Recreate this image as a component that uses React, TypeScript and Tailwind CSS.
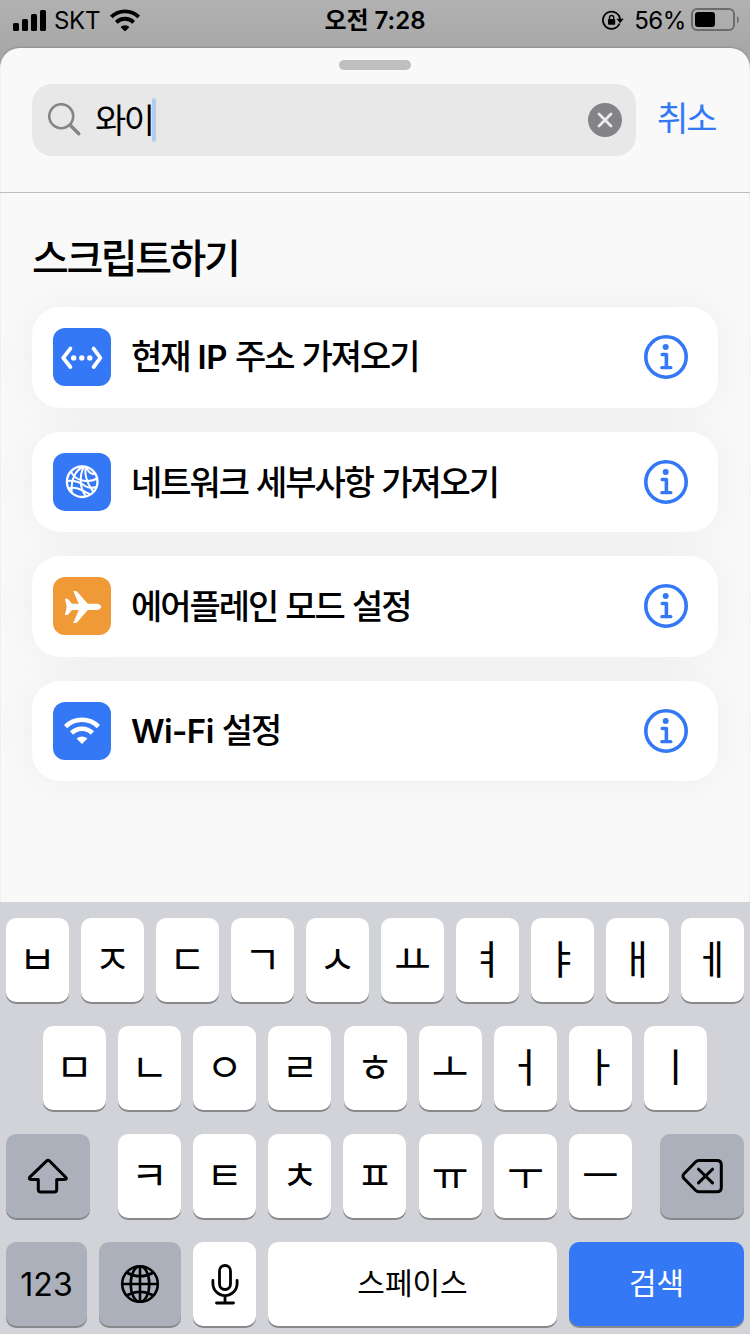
import type { ReactNode } from 'react'

const row1 = ['ㅂ', 'ㅈ', 'ㄷ', 'ㄱ', 'ㅅ', 'ㅛ', 'ㅕ', 'ㅑ', 'ㅐ', 'ㅔ']
const row2 = ['ㅁ', 'ㄴ', 'ㅇ', 'ㄹ', 'ㅎ', 'ㅗ', 'ㅓ', 'ㅏ', 'ㅣ']
const row3 = ['ㅋ', 'ㅌ', 'ㅊ', 'ㅍ', 'ㅠ', 'ㅜ', 'ㅡ']

function WifiIcon({ className }: { className: string }) {
  return (
    <svg viewBox="0 0 36 27" className={className} fill="none" stroke="currentColor">
      <path d="M1.6 9.6a23.2 23.2 0 0 1 32.8 0" strokeWidth="4.6" />
      <path d="M7.6 16a14.7 14.7 0 0 1 20.8 0" strokeWidth="4.6" />
      <path d="M18 27l-5.4-5.4a7.7 7.7 0 0 1 10.8 0z" fill="currentColor" stroke="none" />
    </svg>
  )
}

function CodeIcon() {
  return (
    <svg viewBox="0 0 58 58" className="size-full" fill="none" stroke="white">
      <path
        d="M17.4 20.6L10.2 29.8L17.4 39M40.6 20.6L47.4 29.8L40.6 39"
        strokeWidth="3.8"
        strokeLinecap="round"
        strokeLinejoin="round"
      />
      <g fill="white" stroke="none">
        <circle cx="20.7" cy="29.9" r="2.7" />
        <circle cx="28.8" cy="29.9" r="2.7" />
        <circle cx="36.8" cy="29.9" r="2.7" />
      </g>
    </svg>
  )
}

function NetworkIcon() {
  return (
    <svg viewBox="0 0 58 58" className="size-full" fill="none" stroke="white" strokeWidth="2">
      <circle cx="29.2" cy="28.7" r="15.3" strokeWidth="2.3" />
      <path d="M30.5 13.5C23 17 18 25 18.6 39.5" />
      <path d="M31 13.5C26.500 22 26 34 33 43.5" />
      <path d="M33 13.8C31 20 34 31 40.2 38.500" />
      <path d="M33.500 13.800C34 18 38 22 42 20.800" />
      <path d="M18 18.500C22 28.500 36 30 44.300 25.500" />
      <path d="M14 28C22 27 28 30 32 33C36 35.500 40 35 43 34" />
      <path d="M15.500 35.500C23 32.500 31 38.500 37 41.500" />
    </svg>
  )
}

function PlaneIcon() {
  return (
    <svg viewBox="0 0 58 58" className="size-full" fill="white">
      <path d="M48.2 29.800C48.200 31.500 46 33 43 33H34.800L24.400 45C23.800 45.700 23.200 46 22.400 46H20.200L25.800 33H19L15.400 37.300C15 37.800 14.500 38 13.900 38H12L13.700 29.800L12 21.800H13.900C14.500 21.800 15 22 15.400 22.500L19 26.800H25.800L20.200 14H22.400C23.200 14 23.800 14.300 24.400 15L34.800 26.800H43C46 26.800 48.200 28.200 48.200 29.800Z" />
    </svg>
  )
}

function InfoIcon() {
  return (
    <svg viewBox="0 0 44 44" className="size-11" fill="none" stroke="#3478f6">
      <circle cx="22" cy="22" r="20.2" strokeWidth="3.6" />
      <circle cx="21.7" cy="12" r="3" fill="#3478f6" stroke="none" />
      <path d="M18.300 19.500H22.400V32.500" strokeWidth="3.6" strokeLinecap="round" strokeLinejoin="round" />
      <path d="M17.800 32.700H26.900" strokeWidth="3.200" strokeLinecap="round" />
    </svg>
  )
}

function Latin({ children }: { children: ReactNode }) {
  return <span className="font-[Inter] text-[33px] font-semibold tracking-[-0.6px]">{children}</span>
}

const actions = [
  { id: 'ip', size: 'h-[101px] pb-px', color: 'bg-[#3478f6]', icon: <CodeIcon />, label: <>현재 <Latin>IP</Latin> 주소 가져오기</> },
  { id: 'network', size: 'h-[100px]', color: 'bg-[#3478f6]', icon: <NetworkIcon />, label: '네트워크 세부사항 가져오기' },
  { id: 'airplane', size: 'h-[101px] pb-px', color: 'bg-[#f09a37]', icon: <PlaneIcon />, label: '에어플레인 모드 설정' },
  { id: 'wifi', size: 'h-[100px]', color: 'bg-[#3478f6]', icon: <WifiIcon className="mx-auto mt-[15px] w-9 text-white" />, label: <><Latin>Wi-Fi</Latin> 설정</> },
]

function Key({ children, className = 'w-[63px] bg-white' }: { children: ReactNode; className?: string }) {
  return (
    <button className={`flex h-[84px] shrink-0 items-center justify-center rounded-[10px] shadow-[0_2px_0_#88898c] ${className}`}>
      {children}
    </button>
  )
}

function Letter({ children }: { children: string }) {
  return (
    <Key>
      <span className="pb-[6px] text-[40px] leading-none">{children}</span>
    </Key>
  )
}

function StatusBar() {
  return (
    <header className="grid h-12 grid-cols-3 bg-linear-to-b from-[#b1b1b1] to-[#a8a8a8] font-[Inter,'Noto_Sans_CJK_KR',sans-serif] text-[24px] leading-[42px]">
      <div className="flex h-10 items-center pl-[13px]">
        <svg viewBox="0 0 33 21" className="h-[21px] w-[33px]">
          <rect x="0" y="13" width="6" height="8" rx="1.5" />
          <rect x="9" y="9" width="6" height="12" rx="1.5" />
          <rect x="18" y="4" width="6" height="17" rx="1.5" />
          <rect x="27" y="0" width="6" height="21" rx="1.5" />
        </svg>
        <span className="ml-2 pt-[2px] tracking-[-0.3px]">SKT</span>
        <WifiIcon className="ml-[10px] w-[30px]" />
      </div>
      <div className="text-center font-semibold">오전 7:28</div>
      <div className="flex h-10 items-center justify-end pr-[11px]">
        <svg viewBox="0 0 22 20" className="h-5 w-[22px]" fill="none" stroke="black" strokeWidth="1.8">
          <path d="M17.500 13.500A8.600 8.600 0 1 1 18.100 9.500" />
          <path d="M14.500 8.700h7.200l-3.600 4.500z" fill="black" stroke="none" />
          <rect x="6" y="9" width="7.200" height="5.800" rx="1" fill="black" stroke="none" />
          <path d="M7.500 9.500V7.600a2.100 2.100 0 0 1 4.200 0v1.900" strokeWidth="1.300" />
        </svg>
        <span className="ml-[10px] pt-[2px] tracking-[-0.4px]">56%</span>
        <svg viewBox="0 0 48 24" className="ml-[5px] h-6 w-12">
          <rect x="1" y="1" width="42" height="21" rx="5" fill="none" stroke="#6c6c6c" strokeWidth="2" />
          <rect x="4" y="4" width="20" height="15" rx="3" />
          <path d="M46 8c2.500 1.500 2.500 6 0 7.500z" fill="#6c6c6c" />
        </svg>
      </div>
    </header>
  )
}

function Keyboard() {
  return (
    <div className="flex h-[432px] flex-col gap-6 bg-[#d2d3d9] px-[6px] pt-4">
      <div className="flex justify-between">
        {row1.map((k) => <Letter key={k}>{k}</Letter>)}
      </div>
      <div className="flex justify-between px-[37px]">
        {row2.map((k) => <Letter key={k}>{k}</Letter>)}
      </div>
      <div className="flex justify-between">
        <Key className="w-[84px] bg-[#abb0bb]">
          <svg viewBox="0 0 42 36" className="h-9 w-[42px]" fill="none" stroke="black" strokeWidth="3" strokeLinejoin="round">
            <path d="M19.7 2.8L2.8 19.2Q1.4 21.5 4 21.5H11.3V31.5Q11.3 34 13.8 34H27.2Q29.7 34 29.7 31.5V21.5H37.5Q40.6 21.5 38.7 19.2L22.3 2.8Q21 1.5 19.7 2.8Z" />
          </svg>
        </Key>
        <div className="flex w-[514px] justify-between">
          {row3.map((k) => <Letter key={k}>{k}</Letter>)}
        </div>
        <Key className="w-[84px] bg-[#abb0bb]">
          <svg viewBox="0 0 42 36" className="h-9 w-[42px]" fill="none" stroke="black" strokeWidth="3" strokeLinecap="round" strokeLinejoin="round">
            <path d="M18 2.5H36Q40.3 2.5 40.3 6.8V29.5Q40.3 33.8 36 33.8H18Q16 33.8 14.5 32.3L3 20.5Q1 18.2 3 15.8L14.5 4Q16 2.5 18 2.5ZM17.5 11.2L31.5 24.9M31.5 11.2L17.5 24.9" />
          </svg>
        </Key>
      </div>
      <div className="flex gap-3 text-[30px] leading-none">
        <Key className="w-[81px] bg-[#abb0bb]">
          <span className="pt-[2px] font-[Inter] text-[32px]">123</span>
        </Key>
        <Key className="w-[82px] bg-[#abb0bb]">
          <svg viewBox="0 0 40 40" className="size-10" fill="none" stroke="black" strokeWidth="2.6">
            <circle cx="20" cy="20" r="17.8" />
            <ellipse cx="20" cy="20" rx="9.3" ry="17.8" />
            <path d="M20 2V38M2 20H38M6.500 8.500Q20 16 33.500 8.500M6.500 31.500Q20 24 33.500 31.500" />
          </svg>
        </Key>
        <Key>
          <svg viewBox="0 0 28 42" className="h-[42px] w-7" fill="none" stroke="black" strokeWidth="2.8" strokeLinecap="round">
            <rect x="8.500" y="2.500" width="11" height="24" rx="5.500" />
            <path d="M1.900 17.500V20.500a12.100 12.100 0 0 0 24.200 0V17.500M14 32.800V40M5.500 40H22.500" />
          </svg>
        </Key>
        <Key className="w-[289px] bg-white">
          <span className="pb-[6px]">스페이스</span>
        </Key>
        <Key className="w-[175px] bg-[#3478f6] text-white">
          <span className="pb-[6px]">검색</span>
        </Key>
      </div>
    </div>
  )
}

export default function App() {
  return (
    <div className="flex h-[1334px] w-[750px] flex-col overflow-hidden bg-[#a8a8a8] font-['Noto_Sans_CJK_KR',sans-serif] text-black">
      <StatusBar />
      <main className="flex h-[854px] flex-col rounded-t-[20px] border-x border-[#f0f0f0] bg-[#f9f9f9] shadow-[0_-1px_2px_#8d8d8d]">
        <div className="mx-auto mt-3 h-[10px] w-[72px] rounded-full bg-[#bfbfc1]" />
        <div className="mt-[14px] flex h-[72px] items-center pl-[31px]">
          <div className="flex h-[72px] w-[604px] items-center rounded-[20px] bg-[#e8e8e8] pr-[14px] pl-4">
            <svg viewBox="0 0 34 34" className="size-[34px]" fill="none" stroke="#858589" strokeLinecap="round">
              <circle cx="13.2" cy="13.2" r="12" strokeWidth="2.6" />
              <path d="M22.3 22.3L30.8 30.8" strokeWidth="3.4" />
            </svg>
            <span className="ml-[13px] pb-[3px] text-[34px] leading-none tracking-[-0.075em]">와이</span>
            <span className="h-11 w-1 rounded-full bg-[#b3cdf2]" />
            <svg viewBox="0 0 34 34" className="ml-auto size-[34px]">
              <circle cx="17" cy="17" r="17" fill="#838388" />
              <path d="M11 11L23 23M23 11L11 23" stroke="#ececec" strokeWidth="2.8" strokeLinecap="round" />
            </svg>
          </div>
          <button className="ml-[21px] pb-[6px] text-[34px] leading-none tracking-[-0.06em] text-[#3478f6]">취소</button>
        </div>
        <div className="-mx-px mt-9 h-px shrink-0 bg-[#bcbcbe]" />
        <h1 className="mt-[35px] ml-[31px] h-14 text-[40px] leading-[56px] font-medium tracking-[-0.06em]">스크립트하기</h1>
        <ul className="mt-[23px] flex flex-col gap-6 px-[31px]">
          {actions.map((a) => (
            <li
              key={a.id}
              className={`flex shrink-0 items-center rounded-[28px] bg-white pr-[30px] pl-[21px] shadow-[0_0_44px_rgba(0,0,0,0.05)] ${a.size}`}
            >
              <span className={`size-[58px] rounded-[12px] ${a.color}`}>{a.icon}</span>
              <span className="ml-5 flex-1 pb-[3px] text-[34px] leading-none font-medium tracking-[-0.06em] [word-spacing:2.5px] whitespace-pre">
                {a.label}
              </span>
              <InfoIcon />
            </li>
          ))}
        </ul>
      </main>
      <Keyboard />
    </div>
  )
}
